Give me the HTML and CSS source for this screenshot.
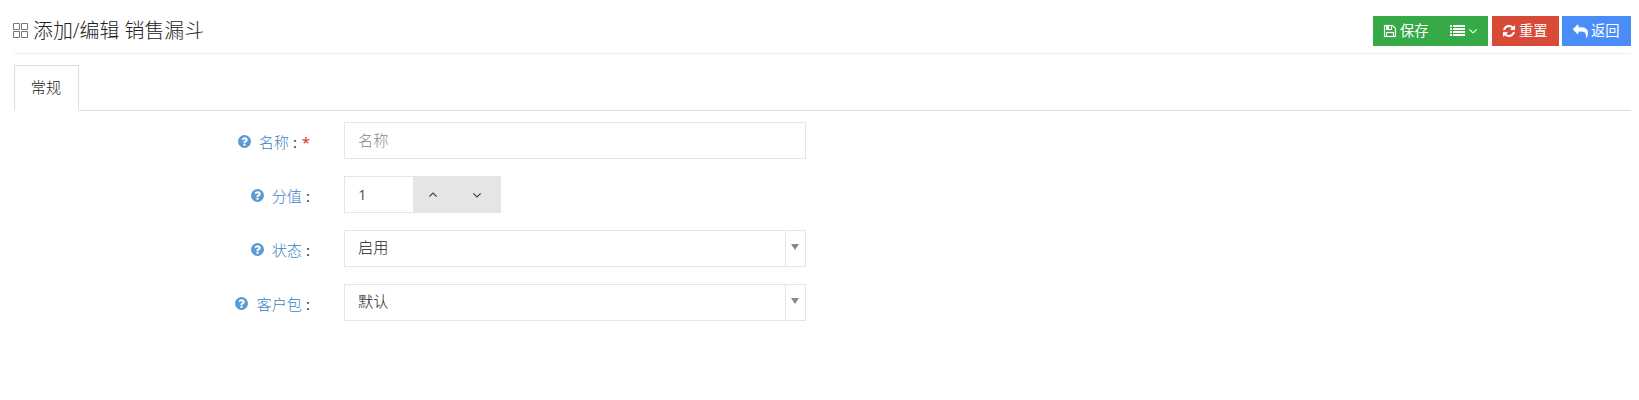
FILE: index.html
```html
<!DOCTYPE html>
<html lang="zh-CN">
<head>
<meta charset="utf-8">
<title>添加/编辑 销售漏斗</title>
<link rel="stylesheet" href="styles.css">
</head>
<body>
<svg class="defs" aria-hidden="true">
  <symbol id="help" viewBox="0 0 1792 1792"><path d="M1024 1376v-192q0-14-9-23t-23-9h-192q-14 0-23 9t-9 23v192q0 14 9 23t23 9h192q14 0 23-9t9-23zm256-672q0-88-55.500-163t-138.500-116-170-41q-243 0-371 213-15 24 8 42l132 100q7 6 19 6 16 0 25-12 53-68 86-92 34-24 86-24 48 0 85.500 26t37.500 59q0 38-20 61t-68 45q-63 28-115.500 86.500t-52.500 125.500v36q0 14 9 23t23 9h192q14 0 23-9t9-23q0-19 21.500-49.500t54.500-49.500q32-18 49-28.500t46-35 44.500-48 28-60.500 12.500-81zm384 192q0 209-103 385.500t-279.500 279.500-385.500 103-385.500-103-279.500-279.500-103-385.500 103-385.500 279.500-279.500 385.500-103 385.500 103 279.500 279.500 103 385.500z"/></symbol>
  <symbol id="down" viewBox="0 0 1792 1792"><path d="M1395 736q0 13-10 23l-466 466q-10 10-23 10t-23-10l-466-466q-10-10-10-23t10-23l50-50q10-10 23-10t23 10l393 393 393-393q10-10 23-10t23 10l50 50q10 10 10 23z"/></symbol>
</svg>
<header class="head">
  <h1 class="title">
    <svg class="grid-icon" viewBox="0 0 15 15"><path d="M.5.5h6v6h-6zM8.500.5h6v6h-6zM.5 8.500h6v6h-6zM8.500 8.500h6v6h-6z"/></svg>
    <span>添加/编辑 销售漏斗</span>
  </h1>
  <div class="actions">
    <div class="group">
      <button class="btn save"><svg class="icon" viewBox="0 0 1792 1792"><path d="M512 1536h768v-384h-768v384zm896 0h128v-896q0-14-10-38.500t-20-34.500l-281-281q-10-10-34-20t-39-10v416q0 40-28 68t-68 28h-576q-40 0-68-28t-28-68v-416h-128v1280h128v-416q0-40 28-68t68-28h832q40 0 68 28t28 68v416zm-384-928v-320q0-13-9.500-22.500t-22.500-9.500h-192q-13 0-22.500 9.500t-9.500 22.500v320q0 13 9.500 22.500t22.500 9.500h192q13 0 22.500-9.500t9.500-22.500zm640 32v928q0 40-28 68t-68 28h-1344q-40 0-68-28t-28-68v-1344q0-40 28-68t68-28h928q40 0 88 20t76 48l280 280q28 28 48 76t20 88z"/></svg><span>保存</span></button>
      <button class="btn more"><svg class="list" viewBox="0 0 15 12"><path d="M0 0h2v2H0zM3 0h12v2H3zM0 3h2v2H0zM3 3h12v2H3zM0 6h2v2H0zM3 6h12v2H3zM0 9h2v2H0zM3 9h12v2H3z"/></svg><svg class="chev"><use href="#down"/></svg></button>
    </div>
    <button class="btn reset"><svg class="icon" viewBox="0 0 1792 1792"><path d="M1639 1056q0 5-1 7-64 268-268 434.500t-478 166.500q-146 0-282.500-55t-243.500-157l-129 129q-19 19-45 19t-45-19-19-45v-448q0-26 19-45t45-19h448q26 0 45 19t19 45-19 45l-137 137q71 66 161 102t187 36q134 0 250-65t186-179q11-17 53-117 8-23 30-23h192q13 0 22.500 9.500t9.500 22.500zm25-800v448q0 26-19 45t-45 19h-448q-26 0-45-19t-19-45 19-45l138-138q-148-137-349-137-134 0-250 65t-186 179q-11 17-53 117-8 23-30 23h-199q-13 0-22.500-9.500t-9.500-22.500v-7q65-268 270-434.500t480-166.500q146 0 284 55.500t245 156.500l130-129q19-19 45-19t45 19 19 45z"/></svg><span>重置</span></button>
    <button class="btn back"><svg class="icon" viewBox="0 0 1792 1792"><path transform="matrix(-1 0 0 1 1792 0)" d="M1792 640q0 26-19 45l-512 512q-19 19-45 19t-45-19-19-45v-256h-224q-98 0-175.500 6t-154 21.500-133 42.500-105.500 69.500-80 101-48.500 138.500-17.500 181q0 55 5 123 0 6 2.500 23.500t2.500 26.500q0 15-8.500 25t-23.500 10q-16 0-28-17-7-9-13-22t-13.500-30-10.500-24q-127-285-127-451 0-199 53-333 162-403 875-403h224v-256q0-26 19-45t45-19 45 19l512 512q19 19 19 45z"/></svg><span>返回</span></button>
  </div>
</header>
<nav class="tabs"><a class="tab">常规</a></nav>
<main class="form">
  <div class="row">
    <label class="label"><svg class="help"><use href="#help"/></svg><span class="name">名称</span><span class="colon">:</span><span class="star">*</span></label>
    <div class="field placeholder">名称</div>
  </div>
  <div class="row">
    <label class="label"><svg class="help"><use href="#help"/></svg><span class="name">分值</span><span class="colon">:</span></label>
    <div class="spinner"><div class="field number">1</div><button class="step"><svg class="chev up"><use href="#down"/></svg></button><button class="step"><svg class="chev"><use href="#down"/></svg></button></div>
  </div>
  <div class="row">
    <label class="label"><svg class="help"><use href="#help"/></svg><span class="name">状态</span><span class="colon">:</span></label>
    <div class="field select"><span>启用</span><i class="arrow"></i></div>
  </div>
  <div class="row">
    <label class="label"><svg class="help"><use href="#help"/></svg><span class="name">客户包</span><span class="colon">:</span></label>
    <div class="field select"><span>默认</span><i class="arrow"></i></div>
  </div>
</main>
</body>
</html>
```
FILE: styles.css
```css
* { box-sizing: border-box; }
body { margin: 0; padding: 0 8px 0 14px; background: #fff; color: #222; font: 300 15.200px/20px "Open Sans", "Noto Sans CJK SC", sans-serif; }
svg { display: block; fill: currentColor; flex: none; }
.defs { position: absolute; width: 0; height: 0; }
button { border: 0; margin: 0; padding: 0; font: inherit; color: inherit; }
.head { display: flex; justify-content: space-between; height: 54px; border-bottom: 1px solid #eee; }
.title { display: flex; gap: 5px; height: 30px; margin: 16px 0 0 -1px; font-size: 19.900px; font-weight: 300; line-height: 29px; color: #222; }
.grid-icon { width: 15px; height: 15px; margin-top: 7px; fill: none; stroke: #777; }
.actions { display: flex; gap: 3px; padding-top: 16px; }
.group { display: flex; margin-right: 1px; }
.btn { display: flex; align-items: center; height: 30px; padding-left: 9px; gap: 3px; color: #fff; font-size: 14.300px; font-weight: 400; line-height: 20px; }
.icon { width: 14px; height: 14px; stroke: currentColor; stroke-width: 20px; }
.save { width: 67px; padding-left: 10px; background: #35aa47; }
.more { width: 48px; background: #35aa47; padding-left: 10px; gap: 1px; }
.list { width: 15px; height: 12px; }
.chev { width: 14px; height: 14px; }
.reset .icon { margin-left: 1px; }
.up { transform: scaleY(-1); }
.reset { width: 67px; background: #d84a38; }
.back { width: 69px; background: #4b8df8; padding-left: 11px; }
.back .icon { width: 15px; height: 15px; }
.tabs { display: flex; height: 46px; margin-top: 11px; border-bottom: 1px solid #ddd; }
.tab { width: 65px; height: 46px; padding-right: 1px; border: 1px solid #ddd; border-bottom-color: #fff; line-height: 42px; text-align: center; color: #222; }
.form { display: flex; flex-direction: column; gap: 17px; padding-top: 11px; }
.row { display: flex; height: 37px; }
.label { display: flex; align-items: center; justify-content: flex-end; width: 296px; margin-right: 34px; padding-top: 2px; }
.help { width: 15px; height: 15px; color: #5b9bd1; }
.name { margin-left: 7px; color: #3b83c2; }
.colon { width: 8px; text-align: right; font-weight: 400; }
.star { width: 13px; text-align: right; color: #e02222; font-weight: 400; }
.field { display: flex; width: 462px; height: 37px; padding-left: 13px; border: 1px solid #e5e5e5; line-height: 35px; color: #222; }
.placeholder { color: #888; }
.spinner { display: flex; }
.number { width: 69px; border-right: 0; font-weight: 400; color: #555; }
.step { display: flex; align-items: center; justify-content: center; width: 44px; height: 37px; padding-right: 5px; background: #e5e5e5; color: #333; }
.select { justify-content: space-between; line-height: 33px; }
.arrow { width: 20px; height: 35px; border-left: 1px solid #e5e5e5; }
.arrow::before { content: ""; display: block; margin: 13px 0 0 5px; width: 0; border: 4px solid transparent; border-top: 6px solid #888; border-bottom: 0; }
```
